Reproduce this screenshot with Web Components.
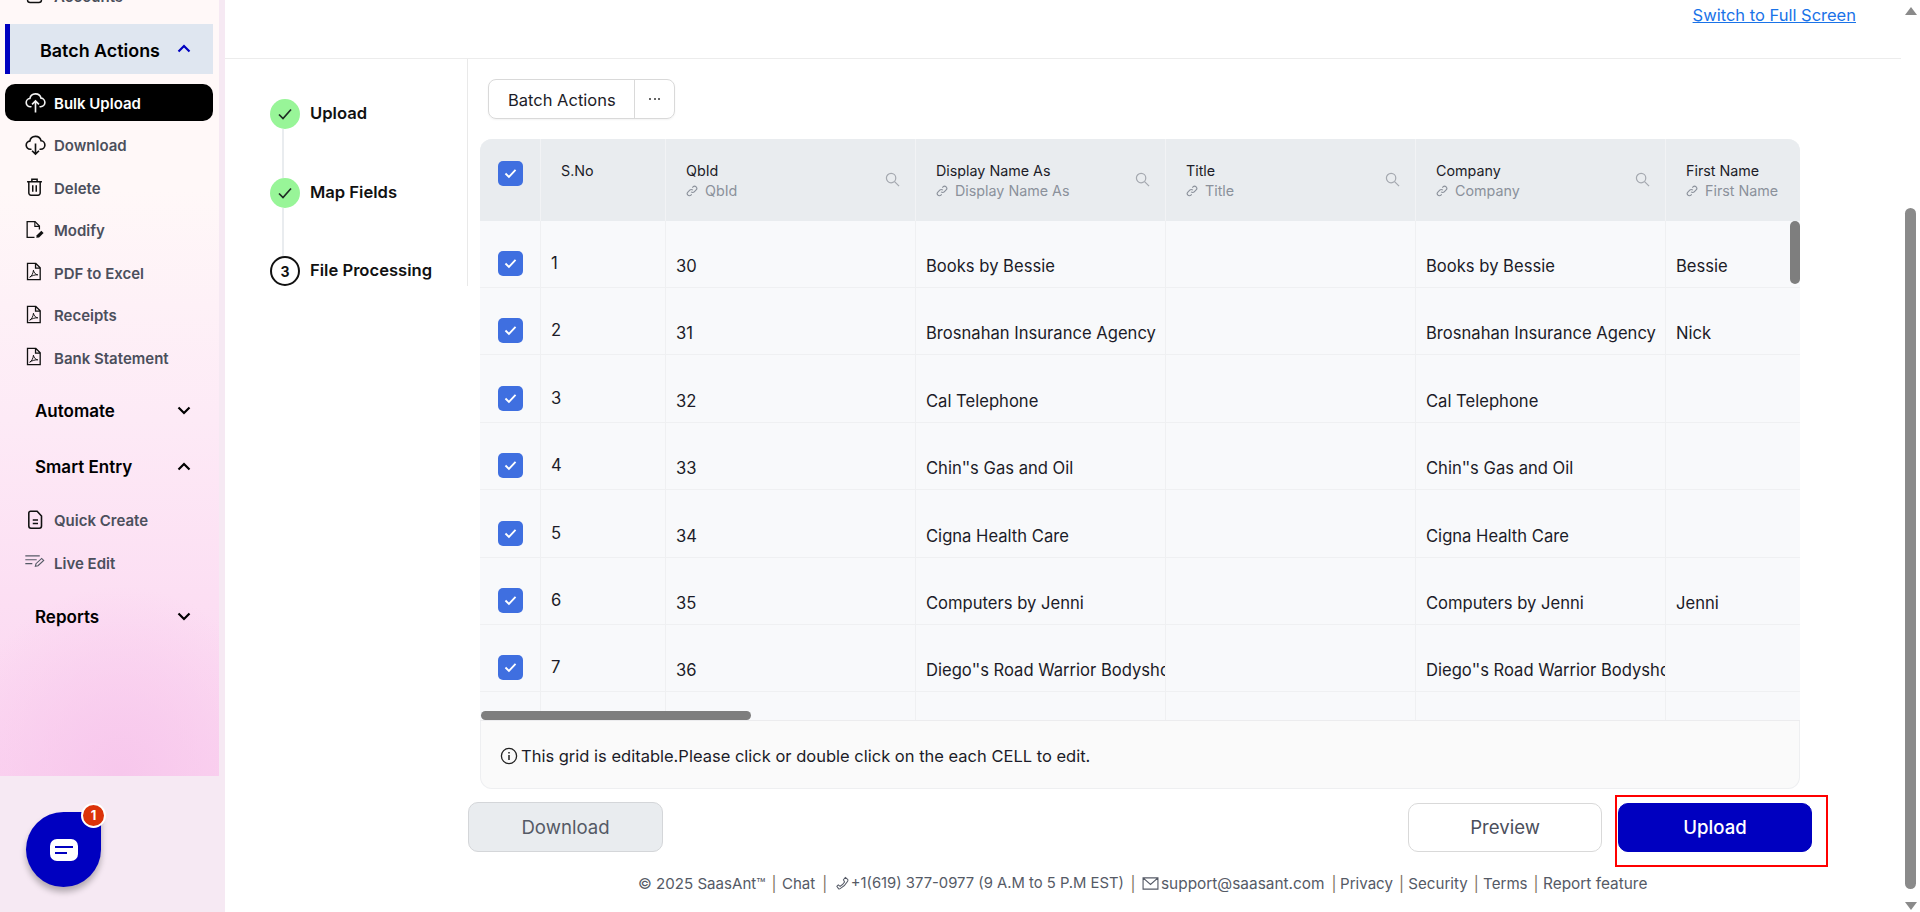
<!DOCTYPE html>
<html lang="en"><head><meta charset="utf-8"><title>SaasAnt</title>
<style>
html,body{margin:0;height:100%;overflow:hidden;background:#fff;font-family:Inter,"Liberation Sans",sans-serif}
</style></head><body>
<app-shell>
  <side-nav slot="nav">
    <nav-item icon="table" label="Accounts" clip></nav-item>
    <nav-section label="Batch Actions" open active></nav-section>
    <nav-item icon="upload" label="Bulk Upload" selected></nav-item>
    <nav-item icon="download" label="Download"></nav-item>
    <nav-item icon="trash" label="Delete"></nav-item>
    <nav-item icon="modify" label="Modify"></nav-item>
    <nav-item icon="pdf" label="PDF to Excel"></nav-item>
    <nav-item icon="pdf" label="Receipts"></nav-item>
    <nav-item icon="pdf" label="Bank Statement"></nav-item>
    <nav-section label="Automate" style="margin-top:4px"></nav-section>
    <nav-section label="Smart Entry" open></nav-section>
    <nav-item icon="doc" label="Quick Create" style="margin-top:4px"></nav-item>
    <nav-item icon="live" label="Live Edit"></nav-item>
    <nav-section label="Reports" style="margin-top:5px"></nav-section>
  </side-nav>
  <top-bar slot="top"></top-bar>
  <step-list slot="steps">
    <step-item state="done" label="Upload" line></step-item>
    <step-item state="done" label="Map Fields" line></step-item>
    <step-item state="current" num="3" label="File Processing"></step-item>
  </step-list>
  <batch-menu slot="work"></batch-menu>
  <data-grid slot="work"></data-grid>
  <action-bar slot="work"></action-bar>
  <page-footer slot="work"></page-footer>
</app-shell>
<script>
const ICONS={
 table:'<rect x="4" y="4" width="16" height="16" rx="3" fill="none" stroke="currentColor" stroke-width="1.6"/><path d="M4 10h16" stroke="currentColor" stroke-width="1.6"/>',
 upload:'<path d="M7.2 17.5H6.6a4.3 4.3 0 0 1-.5-8.57 6 6 0 0 1 11.7-.4 4.5 4.5 0 0 1-.4 8.97h-.6" fill="none" stroke="currentColor" stroke-width="1.7" stroke-linecap="round"/><path d="M12 23.500V11.500M8.400 15 12 11.400 15.600 15" fill="none" stroke="currentColor" stroke-width="1.7"/>',
 download:'<path d="M7.2 17H6.6a4.3 4.3 0 0 1-.5-8.57 6 6 0 0 1 11.7-.4 4.5 4.5 0 0 1-.4 8.97h-.6" fill="none" stroke="currentColor" stroke-width="1.7" stroke-linecap="round"/><path d="M12 11v11M8.400 18.500 12 22.100l3.600-3.600" fill="none" stroke="currentColor" stroke-width="1.7"/>',
 trash:'<path d="M3.5 6.5h17M9 6.2V3.6h6v2.6M5.5 6.5v13a2.4 2.4 0 0 0 2.4 2.4h8.2a2.4 2.4 0 0 0 2.4-2.4v-13M10 10.5v7.5M14 10.5v7.5" fill="none" stroke="currentColor" stroke-width="1.7"/>',
 modify:'<path d="M12 21H3.6V3h9l5 5v4" fill="none" stroke="currentColor" stroke-width="1.5"/><path d="M12.4 3v5.4h5.2" fill="none" stroke="currentColor" stroke-width="1.3"/><path d="M14 21.5l.6-3 5.2-5.2 2.6 2.6-5.200 5.200z" fill="currentColor"/>',
 pdf:'<path d="M4 2.8h9.5l5 5v13.4H4z M13.2 2.800v5.300h5.300" fill="none" stroke="currentColor" stroke-width="1.5"/><path d="M6.500 18.500c2.500-1.500 4-4.500 4.300-8 .6 3 2.200 5 5 5.300-3-.2-6.500.8-9.300 2.700z" fill="none" stroke="currentColor" stroke-width="1.100"/>',
 doc:'<path d="M7.500 2.500h7.500l5 5.500v11.500a2.500 2.500 0 0 1-2.500 2.500H8a2.500 2.500 0 0 1-2.500-2.500V4.500a2 2 0 0 1 2-2zM10 12.500h6M10 16.500h6" fill="none" stroke="currentColor" stroke-width="1.800"/>',
 live:'<path d="M1.500 5.500h16.500M1.500 10h13M1.500 14.500h8" fill="none" stroke="#555a66" stroke-width="1.400"/><path d="M13 17.500l.7-3 6.500-6 2.300 2.300-6.500 6z" fill="none" stroke="#555a66" stroke-width="1.300"/>'
};
const svg=(n,s)=>`<svg viewBox="0 0 24 24" width="${s}" height="${s}" aria-hidden="true">${ICONS[n]}</svg>`;
function def(tag,css,html){
  customElements.define(tag,class extends HTMLElement{
    constructor(){super();this.attachShadow({mode:'open'});}
    connectedCallback(){this.shadowRoot.innerHTML=`<style>${css}</style>`+(typeof html==='function'?html(this):html);}
  });
}
def('app-shell',`
:host{display:flex;height:912px;width:1920px;overflow:hidden;color:#1c1c28;background:#fff}
.mid{flex:1;min-width:0;display:flex;flex-direction:column}
.body{display:flex;flex:1;min-height:0}
.work{flex:1;min-width:0;display:flex;flex-direction:column}
.bar{width:19px;flex:none;display:flex;flex-direction:column;align-items:center;background:#fff}
.up,.down{width:0;height:0;border-left:6px solid transparent;border-right:6px solid transparent}
.up{border-bottom:8px solid #8a8a8a;margin-top:7px}
.thumb{width:11px;height:681px;margin-top:193px;background:#8a8a8a;border-radius:6px}
.down{border-top:8px solid #8a8a8a;margin-top:13px}
`,`<slot name="nav"></slot><div class="mid"><slot name="top"></slot><div class="body"><slot name="steps"></slot><div class="work"><slot name="work"></slot></div></div></div><div class="bar"><div class="up"></div><div class="thumb"></div><div class="down"></div></div>`);

def('side-nav',`
:host{display:block;width:225px;flex:none;height:912px;background:#f6e9f3;position:relative}
.panel{width:219px;height:776px;overflow:hidden;box-sizing:border-box;background:radial-gradient(ellipse 170px 190px at 55% 100%,#f7c7ec,rgba(247,199,236,0)),linear-gradient(180deg,#fff8f8 0,#fff8f8 190px,#fdeaf6 420px,#fbd3f0 776px)}
.inner{margin-top:-24px}
.chat{position:absolute;left:26px;top:812px;width:75px;height:75px;background:#0000c0;border-radius:50% 0 50% 50%;box-shadow:0 5px 6px rgba(0,0,0,.28);display:flex;align-items:center;justify-content:center}
.bub{width:28px;height:22px;background:#fff;border-radius:7px;display:flex;flex-direction:column;justify-content:center;gap:4px;padding-left:5px;box-sizing:border-box}
.bub i{display:block;height:2px;background:#0000c0}
.bub i:first-child{width:18px}.bub i:last-child{width:12px}
.badge{position:absolute;left:55px;top:-9px;width:21px;height:21px;border-radius:50%;background:#dc3309;border:2px solid #fff;color:#fff;font:700 13px/21px Inter,sans-serif;text-align:center}
`,`<div class="panel"><div class="inner"><slot></slot></div></div>
<div class="chat"><div class="bub"><i></i><i></i></div><div class="badge">1</div></div>`);

def('nav-item',`
:host{display:flex;align-items:center;height:42.5px;margin-left:5px;width:208px;box-sizing:border-box;padding-left:19px;font:600 15px Inter,sans-serif;color:#4b4f5c}
:host([selected]){height:37px;background:#000;color:#fff;border-radius:10px;margin:10px 0 2.75px 5px}
:host([clip]){height:30px;align-items:flex-end}
.ic{width:30px;display:flex;color:#111;flex:none;margin-top:-2px}
.t{padding-top:1px}
:host([selected]) .ic{color:#f2f2f2}
`,h=>{const i=h.getAttribute('icon');return `<span class="ic">${svg(i,(i==='upload'||i==='download')?23:21)}</span><span class="t">${h.getAttribute('label')}</span>`});

def('nav-section',`
:host{display:flex;align-items:center;justify-content:space-between;height:56px;margin-left:5px;width:208px;box-sizing:border-box;padding:0 22px 0 30px;font:600 17px Inter,sans-serif;color:#000}
:host([active]){height:50px;background:#dfe6f0;border-left:5px solid #0000c0;padding:0 22px 0 30px;font-size:17.900px;margin-top:18px}
.t{padding-top:1px}
:host([active]) .t{padding-top:2px}
svg{display:block;margin-top:-1px}
:host([active]) svg{color:#0000c0}
`,h=>`<span class="t">${h.getAttribute('label')}</span><svg viewBox="0 0 14 9" width="14" height="9" fill="none" stroke="currentColor" stroke-width="2.200"><path d="${h.hasAttribute('open')?'M1.500 7.500 7 2l5.500 5.500':'M1.500 1.500 7 7l5.500-5.500'}"/></svg>`);

def('top-bar',`
:host{display:flex;justify-content:flex-end;align-items:flex-start;height:59px;box-sizing:border-box;border-bottom:1px solid #ececec;padding:5px 45px 0 0}
a{font:400 16.500px/20px Inter,sans-serif;color:#1a73e8;text-decoration:underline}
`,`<a href="#">Switch to Full Screen</a>`);

def('step-list',`
:host{display:block;width:243px;height:227px;flex:none;box-sizing:border-box;border-right:1.500px solid #e9e9e9;padding:40px 0 0 45px}
`,`<slot></slot>`);
def('step-item',`
:host{display:block;font:600 16.600px Inter,sans-serif;color:#111}
.row{display:flex;align-items:center;gap:10px;height:30px}
.c{width:30px;height:30px;border-radius:50%;background:#98f598;display:flex;align-items:center;justify-content:center;box-sizing:border-box;flex:none}
:host([state=current]) .c{background:#fff;border:2px solid #111;font:700 14px Inter,sans-serif}
.l{position:relative;top:-1px}
.line{width:2px;height:48.500px;background:#e9ecef;margin-left:12px}
`,h=>`<div class="row"><span class="c">${h.getAttribute('state')==='done'?'<svg viewBox="0 0 14 12" width="14" height="12" fill="none" stroke="#1f2b24" stroke-width="1.700"><path d="M1 6.500 5 10.500 13 1.500"/></svg>':h.getAttribute('num')}</span><span class="l">${h.getAttribute('label')}</span></div>${h.hasAttribute('line')?'<div class="line"></div>':''}`);

def('batch-menu',`
:host{display:flex;align-items:stretch;align-self:flex-start;height:40px;box-sizing:border-box;margin:20px 0 0 20px;width:187px;border:1px solid #d9d9d9;border-radius:8px;box-shadow:0 1px 2px rgba(0,0,0,.05);font:400 16.500px Inter,sans-serif;color:#1c1c28}
.a{width:146px;box-sizing:border-box;border-right:1px solid #d9d9d9;display:flex;align-items:center;padding:1px 0 0 19px}
.b{flex:1;display:flex;align-items:center;justify-content:center;gap:2.500px}
.b i{width:2px;height:2px;border-radius:50%;background:#333}
`,`<div class="a">Batch Actions</div><div class="b"><i></i><i></i><i></i></div>`);

def('check-box',`
:host{display:flex;width:25px;height:25px;background:#3f6fe0;border-radius:5px;align-items:center;justify-content:center}
`,`<svg viewBox="0 0 14 12" width="13" height="11" fill="none" stroke="#fff" stroke-width="2"><path d="M1.500 6 5.300 9.800 12.500 2"/></svg>`);

def('head-cell',`
:host{display:block;position:relative;height:82px;box-sizing:border-box;padding:22px 0 0 20px;border-right:1px solid #f2f3f5;font:400 14.300px/20px Inter,sans-serif;color:#1c1c28;overflow:hidden;white-space:nowrap}
.s{color:#8b919b;display:flex;align-items:center;gap:7px}
.q{position:absolute;right:15px;top:33px;color:#a5a9b0;display:flex}
.s svg{flex:none}
`,h=>{const t=h.getAttribute('label');return `<div>${t}</div>${h.hasAttribute('plain')?'':`<div class="s"><svg viewBox="0 0 14 14" width="12" height="12" fill="none" stroke="#8b919b" stroke-width="1.300"><path d="M6 8a2.500 2.500 0 0 0 3.600 0l2.200-2.200a2.500 2.500 0 0 0-3.600-3.600L7.300 3.100M8 6a2.500 2.500 0 0 0-3.600 0L2.200 8.200a2.500 2.500 0 0 0 3.600 3.600l.9-.9"/></svg><span>${t}</span></div>`}${h.hasAttribute('search')?'<span class="q"><svg viewBox="0 0 16 16" width="15" height="15" fill="none" stroke="currentColor" stroke-width="1.300"><circle cx="6.500" cy="6.500" r="5"/><path d="M10.200 10.200 15 15"/></svg></span>':''}`});

def('data-grid',`
:host{display:block;position:relative;width:1320px;height:650px;margin:20px 0 0 12px;box-sizing:border-box;border-radius:12px;overflow:hidden;background:#fafafa;font:400 16.600px Inter,sans-serif;color:#1c1c28;box-shadow:inset 0 0 0 1px #eeeff1}
.view{height:582px;overflow:hidden;background:#f8f9fb;border-bottom:1px solid #ececee;box-sizing:border-box}
.grid{display:grid;grid-template-columns:61px 125px 250px 250px 250px 250px 250px;width:1436px}
.h{background:#e9ecef;height:82px}
.hc{display:flex;justify-content:center;align-items:flex-start;padding-top:22px;box-sizing:border-box;border-right:1px solid #f2f3f5}
.c{height:67.400px;box-sizing:border-box;border-right:1px solid #eff0f2;border-bottom:1px solid #eff0f2;padding:0 0 11px 10px;display:flex;align-items:flex-end;overflow:hidden;white-space:nowrap;line-height:20px}
.c.first{height:67px}
.c.n{padding-bottom:14px}
.c.k{justify-content:center;padding:0 0 11px 0}
.foot{height:68px;display:flex;align-items:center;gap:3px;padding:2px 0 0 20px;box-sizing:border-box;font-size:16.500px}
.vt{position:absolute;right:0;top:82px;width:10px;height:63px;background:#7e7e7e;border-radius:5px}
.ht{position:absolute;left:1px;top:572px;width:270px;height:9px;background:#7e7e7e;border-radius:5px}
.q{letter-spacing:-1.600px}
`,()=>{
 const rows=[[1,30,'Books by Bessie','Bessie'],[2,31,'Brosnahan Insurance Agency','Nick'],[3,32,'Cal Telephone',''],[4,33,"Chin<span class='q'>'</span>'s Gas and Oil",''],[5,34,'Cigna Health Care',''],[6,35,'Computers by Jenni','Jenni'],[7,36,"Diego<span class='q'>'</span>'s Road Warrior Bodyshop",'']];
 let g='<div class="h hc"><check-box></check-box></div>';
 g+='<div class="h"><head-cell label="S.No" plain></head-cell></div>';
 for(const [t,s] of [['QbId',1],['Display Name As',1],['Title',1],['Company',1],['First Name',0]]) g+=`<div class="h"><head-cell label="${t}" ${s?'search':''}></head-cell></div>`;
 rows.forEach((r,i)=>{const f=i===0?' first':'';
  g+=`<div class="c k${f}"><check-box></check-box></div><div class="c n${f}">${r[0]}</div><div class="c${f}">${r[1]}</div><div class="c${f}"><span>${r[2]}</span></div><div class="c${f}"></div><div class="c${f}"><span>${r[2]}</span></div><div class="c${f}">${r[3]}</div>`;});
 g+='<div class="c"></div>'.repeat(7);
 return `<div class="view"><div class="grid">${g}</div></div><div class="foot"><svg viewBox="0 0 18 18" width="18" height="18" fill="none" stroke="#222" stroke-width="1.300"><circle cx="9" cy="9" r="7.600"/><path d="M9 8v5M9 5v1.600" stroke-width="1.500"/></svg><span>This grid is editable.Please click or double click on the each CELL to edit.</span></div><div class="vt"></div><div class="ht"></div>`;
});

def('action-bar',`
:host{display:flex;position:relative;height:50px;margin-top:13px;width:1344px;font:400 18.600px Inter,sans-serif;align-items:center}
button{font:inherit;height:49px;width:194px;border-radius:10px;box-sizing:border-box;border:1px solid #d9d9d9;background:#fff;color:#4b4f5c}
.d{background:#e9ecef;height:50px;width:195px;color:#555a66;border-color:#d4d6d9;margin-right:auto}
.u{background:#0000c0;border-color:#0000c0;color:#fff;font-weight:500;margin-left:16px}
.mark{position:absolute;left:1147px;top:-7px;width:213px;height:72px;box-sizing:border-box;border:2px solid #f00;pointer-events:none}
`,`<button class="d">Download</button><button>Preview</button><button class="u">Upload</button><div class="mark"></div>`);

def('page-footer',`
:host{display:flex;align-items:center;height:20px;margin-top:21px;padding-left:170px;font:400 15.100px Inter,sans-serif;color:#555a66;white-space:nowrap}
.p{color:#7d6f60}
.ph{font-size:14.800px}.em{font-size:15.400px}
svg{flex:none}
`,`<span>© 2025 SaasAnt™</span><span class="p" style="margin:0 5.400px 0 6px">|</span><span>Chat</span><span class="p" style="margin:0 7.400px 0 7px">|</span><svg viewBox="0 0 16 16" width="15" height="15" fill="none" stroke="#555a66" stroke-width="1.100" style="margin-right:1px"><path d="M11 1.500l2.500 2.200c.5.500.4 1.200 0 1.800-2 3.500-4.500 6-8 8-.6.400-1.300.5-1.800 0L2 11l1.500-1.500 2 1.500c1.800-1.100 3.500-2.800 4.700-4.700L9 4z"/></svg><span class="ph">+1(619) 377-0977 (9 A.M to 5 P.M EST)</span><span class="p" style="margin:0 6.500px 0 6.500px">|</span><svg viewBox="0 0 18 14" width="17" height="13" fill="none" stroke="#555a66" stroke-width="1.200" style="margin-right:2px"><path d="M1 1h16v12H1zM1 1l8 7 8-7"/></svg><span class="em">support@saasant.com</span><span class="p" style="margin:0 3.500px 0 7px">|</span><span>Privacy</span><span class="p" style="margin:0 4.400px 0 6px">|</span><span>Security</span><span class="p" style="margin:0 4.400px 0 6px">|</span><span>Terms</span><span class="p" style="margin:0 4.400px 0 6px">|</span><span class="em">Report feature</span>`);
</script>
</body></html>
